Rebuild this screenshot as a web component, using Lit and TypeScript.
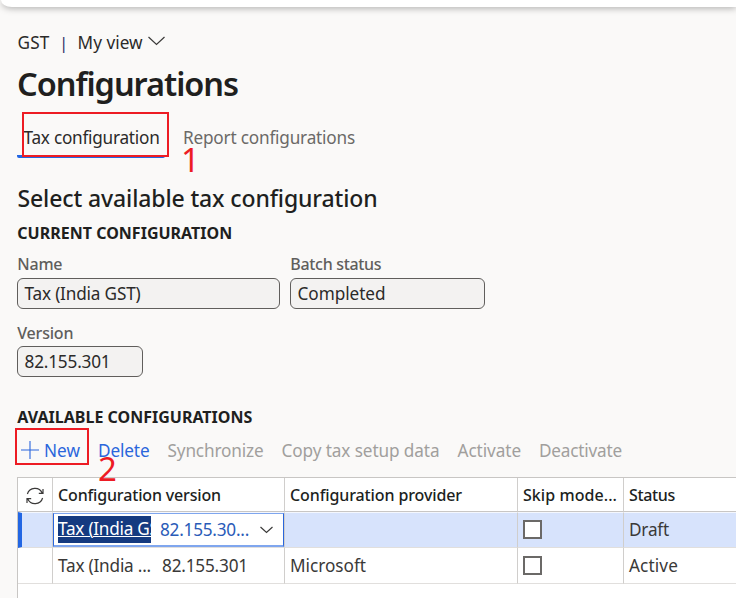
import { LitElement, html, css, svg } from 'lit';
import { customElement, property, state } from 'lit/decorators.js';

/** A single line of text whose tracking is adjusted to fill a given width. */
@customElement('fit-text')
export class FitText extends LitElement {
  @property({ type: Number }) w = 0;
  @property() text = '';
  static styles = css`
    :host { display: inline-block; white-space: pre; }
    .t { display: inline-block; text-decoration: var(--line, none); text-decoration-thickness: 1px; text-underline-offset: 1px; }
  `;
  async updated() {
    await document.fonts.ready;
    const el = this.renderRoot.querySelector('.t') as HTMLElement;
    el.style.letterSpacing = '0px';
    const natural = el.getBoundingClientRect().width;
    const gap = (this.w - natural) / this.text.length;
    el.style.letterSpacing = `${gap.toFixed(3)}px`;
  }
  render() {
    return html`<span class="t">${this.text}</span>`;
  }
}

const t = (text: string, w: number) => html`<fit-text .text=${text} .w=${w}></fit-text>`;

interface Action { label: string; w: number; enabled: boolean; icon?: boolean }

@customElement('app-root')
export class AppRoot extends LitElement {
  @state() actions: Action[] = [
    { label: 'New', w: 36, enabled: true, icon: true },
    { label: 'Delete', w: 51.5, enabled: true },
    { label: 'Synchronize', w: 96, enabled: false },
    { label: 'Copy tax setup data', w: 158, enabled: false },
    { label: 'Activate', w: 63.5, enabled: false },
    { label: 'Deactivate', w: 83, enabled: false },
  ];

  static styles = css`
    :host {
      display: block;
      position: relative;
      width: 736px;
      height: 598px;
      overflow: hidden;
      background: #faf9f8;
      color: #2b2a29;
      font: 400 17.2px/26px "Noto Sans", "Open Sans", sans-serif;
    }
    .top { height: 7px; margin-left: 1px; background: #fff; border-bottom-left-radius: 14px 9px; box-shadow: 0 1px 7px rgba(0,0,0,.34); }
    .page { padding-left: 17px; display: flex; flex-direction: column; }
    .crumb { display: flex; align-items: center; height: 26px; margin-top: 23px; padding-left: .6px; }
    .bar { width: 28px; text-align: center; font-size: 17px; color: #33336b; margin-top: -1px; }
    .crumb svg { margin: -5px 0 0 5px; }
    .title { height: 44px; font: 600 32.5px/44px "Noto Sans", sans-serif; margin: 6px 0 0; color: #201f1e; }
    .tabs { display: flex; margin-top: 18px; height: 34px; }
    .tab { box-sizing: border-box; padding: 1px 0 0 6.5px; width: 148px; border-bottom: 3px solid #2266e3; border-radius: 2px; height: 34px; }
    .tab.off { color: #6b6967; border-color: transparent; padding-left: 18px; width: auto; }
    .sub { font: 500 23px/32px "Noto Sans", sans-serif; height: 32px; margin: 24px 0 0; padding-left: .5px; color: #201f1e; }
    .cap { font: 700 16px/24px "Noto Sans", sans-serif; height: 24px; margin: 7px 0 0; padding-left: .3px; color: #201f1e; }
    .fields { display: flex; gap: 10px; margin-top: 7px; }
    .fields.second { margin-top: 12px; }
    .label { font: 500 16px/24px "Noto Sans", sans-serif; color: #605e5c; height: 26px; padding-left: .3px; }
    .second .label { height: 25px; }
    .box { box-sizing: border-box; height: 31px; border: 1px solid #605e5c; border-radius: 6px; background: #f3f2f1; padding-left: 6.5px; line-height: 30px; }
    .name { width: 263px; }
    .status { width: 195px; }
    .version { width: 126px; }
    .cap.avail { margin-top: 28px; }
    .actions { display: flex; height: 39px; margin-top: 9px; align-items: flex-start; gap: 18px; padding: 0 0 0 4px; }
    .action { display: flex; align-items: center; color: #a19f9d; height: 26px; }
    .action.on { color: #2a66dc; }
    .action svg { margin: -2px 5px 0 0; }
    .grid { display: grid; grid-template-columns: 35px 232px 233px 106px 113px; border-top: 1px solid #c8c6c4; border-left: 1px solid #c8c6c4; background: #fff; height: 130px; grid-template-rows: 34px 36px 36px; }
    .cell { box-sizing: border-box; border-right: 1px solid #d0cecc; border-bottom: 1px solid #e1dfdd; padding-left: 5px; display: flex; align-items: center; overflow: hidden; color: #3a3938; }
    .head { font: 500 16px/24px "Noto Sans", sans-serif; color: #201f1e; border-bottom-color: #c8c6c4; }
    .sel { background: #d7e3fc; border-top: 1px solid #f4f7fe; }
    .mark { border-left: 4px solid #2266e3; }
    .center { justify-content: center; padding: 0; }
    .center svg { margin-top: 2px; }
    .check { box-sizing: border-box; width: 19px; height: 19px; border: 2px solid #6b6967; background: #fff; }
    .sel .check { margin-bottom: 2px; }
    .edit { padding: 0; }
    .combo { box-sizing: border-box; width: 231px; height: 34px; border: 1px solid #2a66dc; border-top-color: #7fa6ee; border-bottom: 2px solid #7fa6ee; background: #fff; display: flex; align-items: center; padding-left: 4px; color: #2a5bb8; }
    .hl { width: 93px; height: 27px; overflow: hidden; background: #143a80; color: #fff; --line: underline; margin-right: 9px; }
    .combo svg { margin-left: 11px; }
    .second-part { margin-left: 11px; }
    .mb { box-sizing: border-box; position: absolute; border: 2px solid #ed1c24; }
    .b1 { left: 22px; top: 112px; width: 147px; height: 45px; }
    .b2 { left: 15px; top: 428px; width: 74px; height: 37px; }
    .num { position: absolute; color: #ed1c24; font: 400 33px/40px "Noto Sans", sans-serif; }
    .n1 { left: 181px; top: 140px; }
    .n2 { left: 98px; top: 449px; }
  `;

  chevron(w: number, h: number) {
    return html`<svg width=${w + 1} height=${h + 2} viewBox="0 0 ${w + 1} ${h + 2}" fill="none" stroke="#3b3a39" stroke-width="1.2">
      ${svg`<path d="M.5 1 L${(w + 1) / 2} ${h + 0.5} L${w + 0.5} 1"/>`}</svg>`;
  }

  render() {
    return html`
      <div class="top"></div>
      <div class="page">
        <div class="crumb">${t('GST', 32)}<span class="bar">|</span>${t('My view', 65)}${this.chevron(16, 8)}</div>
        <h1 class="title">${t('Configurations', 221)}</h1>
        <div class="tabs">
          <div class="tab">${t('Tax configuration', 136)}</div>
          <div class="tab off">${t('Report configurations', 172)}</div>
        </div>
        <h2 class="sub">${t('Select available tax configuration', 360)}</h2>
        <div class="cap">${t('CURRENT CONFIGURATION', 215)}</div>
        <div class="fields">
          <div><div class="label">${t('Name', 45)}</div><div class="box name">${t('Tax (India GST)', 116)}</div></div>
          <div><div class="label">${t('Batch status', 91)}</div><div class="box status">${t('Completed', 88)}</div></div>
        </div>
        <div class="fields second">
          <div><div class="label">${t('Version', 56)}</div><div class="box version">${t('82.155.301', 86)}</div></div>
        </div>
        <div class="cap avail">${t('AVAILABLE CONFIGURATIONS', 235)}</div>
        <div class="actions">
          ${this.actions.map((a) => html`<span class="action ${a.enabled ? 'on' : ''}">
            ${a.icon ? html`<svg width="18" height="18" viewBox="0 0 18 18" stroke="#2a66dc" stroke-width="1.1"><path d="M9 0V18M0 9H18"/></svg>` : ''}${t(a.label, a.w)}</span>`)}
        </div>
        <div class="grid">
          <div class="cell head center">
            <svg width="18" height="18" viewBox="0 0 18 18" fill="none" stroke="#3b3a39" stroke-width="1.2"><path d="M1.4 7A7.9 7.9 0 0 1 16.2 6M17 2V6.4H12.8M16.6 11A7.9 7.9 0 0 1 1.8 12M1 16V11.6H5.2"/></svg>
          </div>
          <div class="cell head">${t('Configuration version', 163)}</div>
          <div class="cell head">${t('Configuration provider', 172)}</div>
          <div class="cell head">${t('Skip mode...', 94)}</div>
          <div class="cell head">${t('Status', 46)}</div>

          <div class="cell sel mark"></div>
          <div class="cell sel edit"><div class="combo"><span class="hl">${t('Tax (India GST)', 115)}</span>${t('82.155.30...', 89)}${this.chevron(12, 6)}</div></div>
          <div class="cell sel"></div>
          <div class="cell sel"><span class="check"></span></div>
          <div class="cell sel">${t('Draft', 40)}</div>

          <div class="cell"></div>
          <div class="cell">${t('Tax (India ...', 93)}<span class="second-part">${t('82.155.301', 86)}</span></div>
          <div class="cell">${t('Microsoft', 76)}</div>
          <div class="cell"><span class="check"></span></div>
          <div class="cell">${t('Active', 49)}</div>
        </div>
      </div>
      <div class="mb b1"></div><div class="num n1">1</div>
      <div class="mb b2"></div><div class="num n2">2</div>
    `;
  }
}
